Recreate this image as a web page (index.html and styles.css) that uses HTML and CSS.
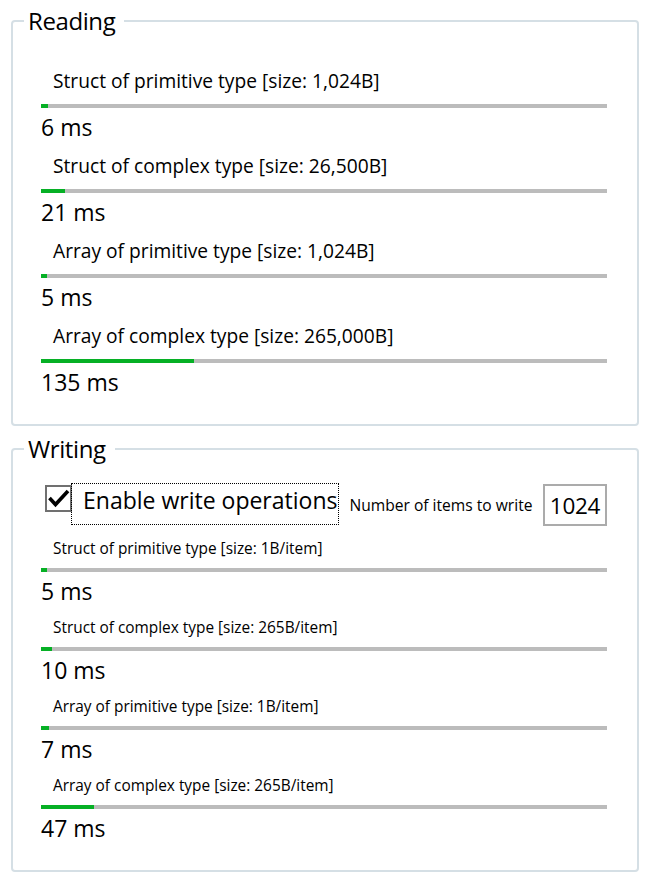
FILE: index.html
```html
<!DOCTYPE html>
<html lang="en">
<head>
<meta charset="utf-8">
<title>Serialization benchmark</title>
<link rel="stylesheet" href="styles.css">
</head>
<body>
<fieldset class="group group-reading">
  <legend class="group-title">Reading</legend>
  <div class="group-body">
    <div class="metric">
      <div class="metric-label">Struct of primitive type [size: 1,024B]</div>
      <div class="bar"><div class="bar-fill" style="width:1.2%"></div></div>
      <div class="metric-value">6 ms</div>
    </div>
    <div class="metric">
      <div class="metric-label">Struct of complex type [size: 26,500B]</div>
      <div class="bar"><div class="bar-fill" style="width:4.2%"></div></div>
      <div class="metric-value">21 ms</div>
    </div>
    <div class="metric">
      <div class="metric-label">Array of primitive type [size: 1,024B]</div>
      <div class="bar"><div class="bar-fill" style="width:1%"></div></div>
      <div class="metric-value">5 ms</div>
    </div>
    <div class="metric">
      <div class="metric-label">Array of complex type [size: 265,000B]</div>
      <div class="bar"><div class="bar-fill" style="width:27%"></div></div>
      <div class="metric-value">135 ms</div>
    </div>
  </div>
</fieldset>

<fieldset class="group group-writing">
  <legend class="group-title">Writing</legend>
  <div class="group-body">
    <div class="write-options">
      <span class="checkbox" role="checkbox" aria-checked="true">
        <svg width="27" height="27" viewBox="0 0 27 27" aria-hidden="true">
          <rect x="1" y="1" width="25" height="25" fill="#fff" stroke="#707070" stroke-width="2"/>
          <path d="M4.5 13 L10.5 19.5 L23 6" fill="none" stroke="#000" stroke-width="3.6"/>
        </svg>
      </span>
      <span class="checkbox-label">Enable write operations</span>
      <span class="count-label">Number of items to write</span>
      <input class="count-input" type="text" value="1024">
    </div>
    <div class="metric metric-small">
      <div class="metric-label">Struct of primitive type [size: 1B/item]</div>
      <div class="bar"><div class="bar-fill" style="width:1%"></div></div>
      <div class="metric-value">5 ms</div>
    </div>
    <div class="metric metric-small">
      <div class="metric-label">Struct of complex type [size: 265B/item]</div>
      <div class="bar"><div class="bar-fill" style="width:2%"></div></div>
      <div class="metric-value">10 ms</div>
    </div>
    <div class="metric metric-small">
      <div class="metric-label">Array of primitive type [size: 1B/item]</div>
      <div class="bar"><div class="bar-fill" style="width:1.4%"></div></div>
      <div class="metric-value">7 ms</div>
    </div>
    <div class="metric metric-small">
      <div class="metric-label">Array of complex type [size: 265B/item]</div>
      <div class="bar"><div class="bar-fill" style="width:9.4%"></div></div>
      <div class="metric-value">47 ms</div>
    </div>
  </div>
</fieldset>
</body>
</html>
```
FILE: styles.css
```css
html, body {
  margin: 0;
  padding: 0;
  background: #fff;
}

body {
  font-family: "Open Sans", "Noto Sans", sans-serif;
  color: #000;
  padding-top: 5px;
}

.group {
  margin: 0 16px 0 11px;
  padding: 0;
  border: 2px solid #d5dfe5;
  border-radius: 4px;
  min-inline-size: 0;
}

.group-writing {
  margin-top: 7px;
}

.group-title {
  margin-left: 11px;
  padding: 0 9px 0 4px;
  font-size: 24px;
  line-height: 32px;
  letter-spacing: -0.4px;
}

.group-body {
  display: flex;
  flex-direction: column;
  gap: 12px;
  padding: 32px 30px 27px 28px;
}

.group-writing .group-body {
  padding-top: 18px;
  gap: 12px;
}

.metric {
  display: flex;
  flex-direction: column;
}

.metric-label {
  font-size: 19.2px;
  line-height: 24px;
  padding-left: 12px;
  margin-bottom: 11px;
  white-space: nowrap;
}

.metric-small .metric-label {
  font-size: 15.4px;
  line-height: 20px;
  margin-bottom: 9px;
}

.bar {
  height: 4px;
  background: #bcbcbc;
  margin-bottom: 4px;
}

.bar-fill {
  height: 100%;
  background: #06b025;
}

.metric-value {
  font-size: 23px;
  line-height: 30px;
}

.write-options {
  display: flex;
  align-items: flex-start;
  height: 43px;
  margin-bottom: 1px;
}

.checkbox {
  display: block;
  width: 27px;
  height: 27px;
  margin: 2px 0 0 4px;
}

.checkbox svg {
  display: block;
}

.checkbox-label {
  margin-left: -1px;
  padding: 0 1px 8px 11px;
  border: 1px dotted #000;
  font-size: 23px;
  line-height: 32px;
  white-space: nowrap;
}

.count-label {
  margin: 12px 0 0 10px;
  font-size: 15.6px;
  line-height: 20px;
  white-space: nowrap;
}

.count-input {
  margin: 1px 0 0 auto;
  box-sizing: border-box;
  width: 64px;
  height: 42px;
  padding: 0;
  border: 2px solid #ababab;
  font-family: "Open Sans", "Noto Sans", sans-serif;
  font-size: 22.5px;
  letter-spacing: -0.3px;
  text-align: center;
  color: #000;
  background: #fff;
  outline: none;
}
```
